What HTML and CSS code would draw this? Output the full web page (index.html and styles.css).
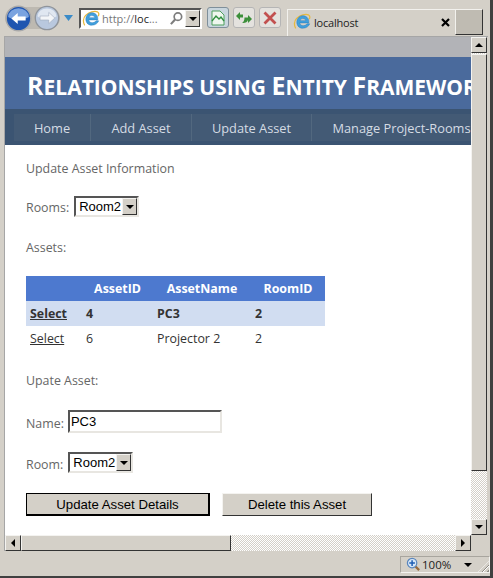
FILE: index.html
```html
<!DOCTYPE html>
<html lang="en">
<head>
    <meta charset="UTF-8">
    <meta name="viewport" content="width=device-width, initial-scale=1.0">
    <title>Update Asset - localhost</title>
    <link rel="stylesheet" href="styles.css">
</head>
<body>
    <svg class="defs" width="0" height="0">
        <symbol id="ie" viewBox="0 0 20 20">
            <path d="M3 17C1 14 1 9 4 6 8 2 14 1 17 2c2 1 2 3 1 5" fill="none" stroke="#e8b93c" stroke-width="1.400"/>
            <path d="M17.500 11H7.500c.3 3.400 5.600 4.400 8.200 1h2.800c-1.600 5.400-11 7-13.500 1.500C2.500 8 6.500 2.500 11.500 3c4.500.5 6.500 4 6 8zM7.800 8.500h6.400C13.800 5.600 8.600 5.400 7.800 8.500z" fill="#3f9fdc" stroke="#1f74b8" stroke-width=".5"/>
        </symbol>
    </svg>

    <div class="window">
        <div class="toolbar">
            <div class="nav-pill">
                <svg class="nav-btn" width="27" height="27" viewBox="0 0 34 34">
                    <circle cx="17" cy="17" r="15.500" fill="#1f55b0" stroke="#a9a9a9" stroke-width="1.800"/>
                    <path d="M4 15a13 11 0 0 1 26 0c-6 4-20 4-26 0z" fill="#7aa3e0"/>
                    <path d="M8 17l8-7v4.500h10v5H16V24z" fill="#fff"/>
                </svg>
                <svg class="nav-btn" width="26" height="26" viewBox="0 0 30 30">
                    <circle cx="15" cy="15" r="13.500" fill="#b9c8de" stroke="#8f949b" stroke-width="1.500"/>
                    <path d="M4 13a11 9 0 0 1 22 0c-5 4-17 4-22 0z" fill="#e0e7f1"/>
                    <path d="M24 15l-7-6.500v4.200H7v4.600h10v4.200z" fill="#f3f5f8" stroke="#97a3b5" stroke-width=".6"/>
                </svg>
            </div>
            <svg class="nav-menu" width="9" height="6" viewBox="0 0 9 6"><path d="M0 0h9L4.500 6z" fill="#3a8bc8"/></svg>
            <div class="address">
                <svg class="address-icon" width="18" height="18"><use href="#ie"/></svg>
                <span class="address-text">http://<b>loc</b>...</span>
                <svg class="search-icon" width="15" height="15" viewBox="0 0 16 16">
                    <circle cx="9.500" cy="6" r="4" fill="none" stroke="#7d7d7d" stroke-width="1.800"/>
                    <path d="M6.500 9L2 14" stroke="#7d7d7d" stroke-width="2.200"/>
                </svg>
                <span class="combo-btn address-drop"></span>
            </div>
            <div class="tool-btn active">
                <svg width="18" height="18" viewBox="0 0 18 18">
                    <path d="M3 2h8l4 4v10H3z" fill="#eef7ee" stroke="#4f9f5f"/>
                    <path d="M3 12l4-5 3 3 2-2 3 4" fill="none" stroke="#2f8f3f" stroke-width="1.300"/>
                </svg>
            </div>
            <div class="tool-btn">
                <svg width="18" height="18" viewBox="0 0 18 18">
                    <path d="M1 7l4-4v2.500h3v3H5V11zM17 10l-4-4v2.500h-3.500c0 3-1 4.500-2.500 5.500 3 .5 5.500-1 6-3V14z" fill="#3c8f3a"/>
                </svg>
            </div>
            <div class="tool-btn">
                <svg width="16" height="16" viewBox="0 0 16 16">
                    <path d="M2.500 2.500l11 11M13.500 2.500l-11 11" stroke="#c2504f" stroke-width="2.800"/>
                </svg>
            </div>
            <div class="tab">
                <svg width="18" height="18"><use href="#ie"/></svg>
                <span class="tab-title">localhost</span>
                <svg class="tab-close" width="9" height="9" viewBox="0 0 9 9">
                    <path d="M1 1l7 7M8 1L1 8" stroke="#000" stroke-width="2.200"/>
                </svg>
            </div>
            <div class="new-tab"></div>
        </div>

        <div class="viewport">
            <div class="view-row">
                <div class="page">
                    <div class="band"></div>
                    <div class="header">
                        <h1><span>R</span>elationships using <span>E</span>ntity <span>F</span>ramework</h1>
                    </div>
                    <div class="menu-wrap">
                        <ul class="menu">
                            <li class="m-home">Home</li>
                            <li class="m-add">Add Asset</li>
                            <li class="m-update">Update Asset</li>
                            <li class="m-manage">Manage Project-Rooms</li>
                        </ul>
                    </div>
                    <div class="content">
                        <p class="heading">Update Asset Information</p>
                        <div class="field rooms-field">
                            <label>Rooms:</label>
                            <span class="combo">
                                <select><option>Room2</option></select>
                                <span class="combo-btn"></span>
                            </span>
                        </div>
                        <p class="assets-label">Assets:</p>
                        <table class="grid">
                            <thead>
                                <tr><th class="col-select"></th><th class="col-id">AssetID</th><th class="col-name">AssetName</th><th class="col-room">RoomID</th></tr>
                            </thead>
                            <tbody>
                                <tr class="selected"><td><a href="#">Select</a></td><td>4</td><td>PC3</td><td>2</td></tr>
                                <tr><td><a href="#">Select</a></td><td>6</td><td>Projector 2</td><td>2</td></tr>
                            </tbody>
                        </table>
                        <p class="update-label">Upate Asset:</p>
                        <div class="field name-field">
                            <label>Name:</label>
                            <input type="text" value="PC3">
                        </div>
                        <div class="field room-field">
                            <label>Room:</label>
                            <span class="combo">
                                <select><option>Room2</option></select>
                                <span class="combo-btn"></span>
                            </span>
                        </div>
                        <div class="actions">
                            <button class="btn-default">Update Asset Details</button>
                            <button>Delete this Asset</button>
                        </div>
                    </div>
                </div>
                <div class="vscroll">
                    <span class="sb-btn"><i class="arrow up"></i></span>
                    <span class="sb-thumb"></span>
                    <span class="sb-track"></span>
                    <span class="sb-btn"><i class="arrow down"></i></span>
                </div>
            </div>
            <div class="hscroll">
                <span class="sb-btn"><i class="arrow left"></i></span>
                <span class="sb-thumb"></span>
                <span class="sb-track"></span>
                <span class="sb-btn"><i class="arrow right"></i></span>
                <span class="sb-corner"></span>
            </div>
        </div>

        <div class="statusbar">
            <div class="zoom-panel">
                <svg width="15" height="15" viewBox="0 0 16 16">
                    <path d="M9 9l5 5" stroke="#9a6b3c" stroke-width="2.400"/>
                    <circle cx="6.500" cy="6.500" r="5" fill="#d6e6f7" stroke="#5a86bd" stroke-width="1.300"/>
                    <path d="M3.500 6.500h6M6.500 3.500v6" stroke="#1f5fb5" stroke-width="1.600"/>
                </svg>
                <span class="zoom-text">100%</span>
                <i class="arrow down zoom-arrow"></i>
                <span class="grip"></span>
            </div>
        </div>
    </div>
</body>
</html>
```

FILE: styles.css
```css
* {
    box-sizing: border-box;
}
html, body {
    margin: 0;
    height: 100%;
    overflow: hidden;
}
body {
    font-family: "Open Sans", sans-serif;
    background-color: #d4d0c8;
}
.defs {
    display: block;
    height: 0;
}
.window {
    width: 493px;
    height: 578px;
    display: flex;
    flex-direction: column;
    border-right: 3px solid #404040;
    border-bottom: 2px solid #404040;
}

/* browser toolbar */
.toolbar {
    height: 36px;
    display: flex;
    align-items: flex-start;
    padding-left: 5px;
    flex-shrink: 0;
}
.nav-pill {
    width: 55px;
    height: 22px;
    margin-top: 7px;
    display: flex;
    align-items: center;
    background: #bdb9b1;
    border-radius: 11px;
}
.nav-btn {
    flex-shrink: 0;
}
.nav-btn + .nav-btn {
    margin-left: 2px;
}
.nav-menu {
    margin: 15px 0 0 4px;
}
.address {
    width: 123px;
    height: 21px;
    margin: 8px 5px 0 6px;
    display: flex;
    align-items: center;
    background: #fff;
    border: 2px solid;
    border-color: #555 #fff #fff #555;
    font-size: 11px;
    color: #777;
}
.address-icon {
    margin-left: 1px;
    flex-shrink: 0;
}
.address-text {
    margin-left: 2px;
    white-space: nowrap;
}
.address-text b {
    font-weight: 400;
    color: #222;
}
.search-icon {
    margin-left: auto;
    flex-shrink: 0;
}
.address-drop {
    height: 17px;
    margin-left: 1px;
}
.tool-btn {
    width: 22px;
    height: 21px;
    margin: 7px 4px 0 0;
    display: flex;
    align-items: center;
    justify-content: center;
    background: #e4e2de;
    border: 1px solid #b5b5b5;
    border-radius: 3px;
}
.tool-btn.active {
    background: #c9d6de;
    border-color: #7f8f9a;
}
.tab {
    width: 168px;
    height: 27px;
    margin: 9px 0 0 2px;
    padding: 0 5px 2px 5px;
    display: flex;
    align-items: center;
    background: #d4d0c8;
    border: 1px solid #f2f1ed;
    border-bottom: none;
    border-right: none;
    font-size: 11px;
    letter-spacing: -.2px;
    color: #222;
}
.tab-title {
    margin-left: 3px;
    flex: 1;
}
.new-tab {
    width: 28px;
    height: 26px;
    margin-top: 9px;
    background: #bfbbb2;
    border: 1px solid;
    border-color: #f2f1ed #333 #333 #f2f1ed;
}

/* page frame */
.viewport {
    height: 515px;
    margin-left: 4px;
    width: 484px;
    display: flex;
    flex-direction: column;
    border-top: 1px solid #a6a6a6;
    border-left: 1px solid #a6a6a6;
    flex-shrink: 0;
}
.view-row {
    height: 499px;
    display: flex;
}
.page {
    width: 466px;
    overflow: hidden;
    background: #fff;
}
.band {
    height: 20px;
    background: #b2b3b7;
}
.header {
    height: 52px;
    padding: 12px 0 0 22px;
    background: #4a6a9c;
}
h1 {
    margin: 0;
    font-size: 21px;
    line-height: 33px;
    font-weight: 700;
    text-transform: uppercase;
    white-space: nowrap;
    color: #fff;
}
h1 span {
    font-size: 25px;
}
.menu-wrap {
    height: 36px;
    padding: 5px 0 4px 9px;
    background: #3b5472;
}
.menu {
    height: 27px;
    margin: 0;
    padding: 0;
    display: flex;
    list-style: none;
    background: #435a75;
    width: 700px;
}
.menu li {
    display: flex;
    align-items: center;
    justify-content: center;
    font-size: 12.800px;
    color: #d5dce4;
    border-right: 1px solid #52687f;
    white-space: nowrap;
}
.m-home { width: 77px; }
.m-add { width: 101px; }
.m-update { width: 120px; }
.m-manage { width: 180px; }

.content {
    padding: 14px 0 0 21px;
    font-size: 12.400px;
    color: #666;
}
.content p {
    margin: 0;
    line-height: 20px;
}
.field {
    display: flex;
    align-items: flex-end;
    gap: 3px;
}
.field label {
    line-height: 16px;
}
.rooms-field {
    margin-top: 17px;
    gap: 5px;
}
.rooms-field label, .name-field label {
    padding-bottom: 1px;
}
.name-field {
    gap: 4px;
}
.room-field {
    gap: 5px;
}
.assets-label {
    margin-top: 21px !important;
}
.combo {
    display: inline-flex;
    align-items: center;
    width: 65px;
    height: 21px;
    padding: 0 0 0 3px;
    background: #fff;
    border: 2px solid;
    border-color: #555 #e8e6e1 #e8e6e1 #555;
}
.combo select {
    appearance: none;
    width: 43px;
    border: none;
    background: none;
    padding: 0;
    font-family: "Liberation Sans", sans-serif;
    font-size: 13px;
    color: #000;
    outline: none;
}
.combo-btn {
    width: 15px;
    height: 17px;
    flex-shrink: 0;
    display: flex;
    align-items: center;
    justify-content: center;
    background: #d4d0c8;
    border: 1px solid;
    border-color: #f4f3f0 #333 #333 #f4f3f0;
}
.combo-btn::after {
    content: "";
    border-style: solid;
    border-width: 4px 4px 0;
    border-color: #000 transparent transparent;
}

.grid {
    margin-top: 18px;
    width: 299px;
    table-layout: fixed;
    border-collapse: collapse;
    color: #333;
}
.grid th {
    height: 25px;
    padding: 0;
    background: #4d79cf;
    color: #fff;
    font-weight: 700;
}
.grid td {
    height: 25px;
    padding: 0 4px;
}
.col-select { width: 56px; }
.col-id { width: 71px; }
.col-name { width: 98px; }
.grid a {
    color: #333;
}
.selected td {
    background: #d1ddf1;
    font-weight: 700;
}
.update-label {
    margin-top: 20px !important;
}
.name-field {
    margin-top: 19px;
}
.name-field input {
    width: 154px;
    height: 23px;
    padding: 0 1px;
    background: #fff;
    border: 2px solid;
    border-color: #555 #e8e6e1 #e8e6e1 #555;
    font-family: "Liberation Sans", sans-serif;
    font-size: 13px;
    color: #000;
    outline: none;
}
.room-field {
    margin-top: 19px;
}
.actions {
    margin-top: 20px;
    display: flex;
    gap: 12px;
}
.actions button {
    width: 150px;
    height: 23px;
    padding: 0;
    background: #d4d0c8;
    border: 1px solid;
    border-color: #f4f3f0 #333 #333 #f4f3f0;
    font-family: "Liberation Sans", sans-serif;
    font-size: 13.200px;
    color: #000;
}
.actions .btn-default {
    width: 184px;
    border: 2px solid #000;
    border-top-width: 1px;
    border-left-width: 1px;
}

/* scrollbars */
.vscroll {
    width: 16px;
    display: flex;
    flex-direction: column;
    background: repeating-conic-gradient(#d4d0c8 0 25%, #fff 0 50%) 0 0 / 2px 2px;
}
.hscroll {
    height: 16px;
    display: flex;
}
.sb-btn {
    width: 16px;
    height: 16px;
    flex-shrink: 0;
    display: flex;
    align-items: center;
    justify-content: center;
    background: #d4d0c8;
    border: 1px solid;
    border-color: #f4f3f0 #333 #333 #f4f3f0;
}
.sb-thumb {
    background: #d4d0c8;
    border: 1px solid;
    border-color: #f4f3f0 #333 #333 #f4f3f0;
}
.vscroll .sb-thumb {
    height: 417px;
    margin-top: 1px;
}
.hscroll .sb-thumb {
    width: 210px;
}
.sb-track {
    flex: 1;
    background: repeating-conic-gradient(#d4d0c8 0 25%, #fff 0 50%) 0 0 / 2px 2px;
}
.sb-corner {
    width: 17px;
    background: #d4d0c8;
}
.arrow {
    display: block;
    border-style: solid;
    border-color: transparent;
}
.arrow.up {
    border-width: 0 4px 4px;
    border-bottom-color: #000;
}
.arrow.down {
    border-width: 4px 4px 0;
    border-top-color: #000;
}
.arrow.left {
    border-width: 4px 4px 4px 0;
    border-right-color: #000;
}
.arrow.right {
    border-width: 4px 0 4px 4px;
    border-left-color: #000;
}

/* status bar */
.statusbar {
    flex: 1;
    display: flex;
    justify-content: flex-end;
    align-items: flex-end;
    padding: 0 0 3px;
}
.zoom-panel {
    width: 90px;
    height: 17px;
    display: flex;
    align-items: center;
    padding-left: 5px;
    border: 1px solid;
    border-color: #a8a59e #f4f3f0 #f4f3f0 #a8a59e;
    font-size: 11.500px;
    color: #222;
}
.zoom-text {
    margin-left: 1px;
}
.zoom-arrow {
    margin-left: 13px;
}
.grip {
    width: 11px;
    height: 11px;
    margin: auto 0 0 auto;
    background: repeating-linear-gradient(135deg, #d4d0c8 0 2px, #8f8c85 2px 3px, #fff 3px 4px);
    clip-path: polygon(100% 0, 100% 100%, 0 100%);
}
```
